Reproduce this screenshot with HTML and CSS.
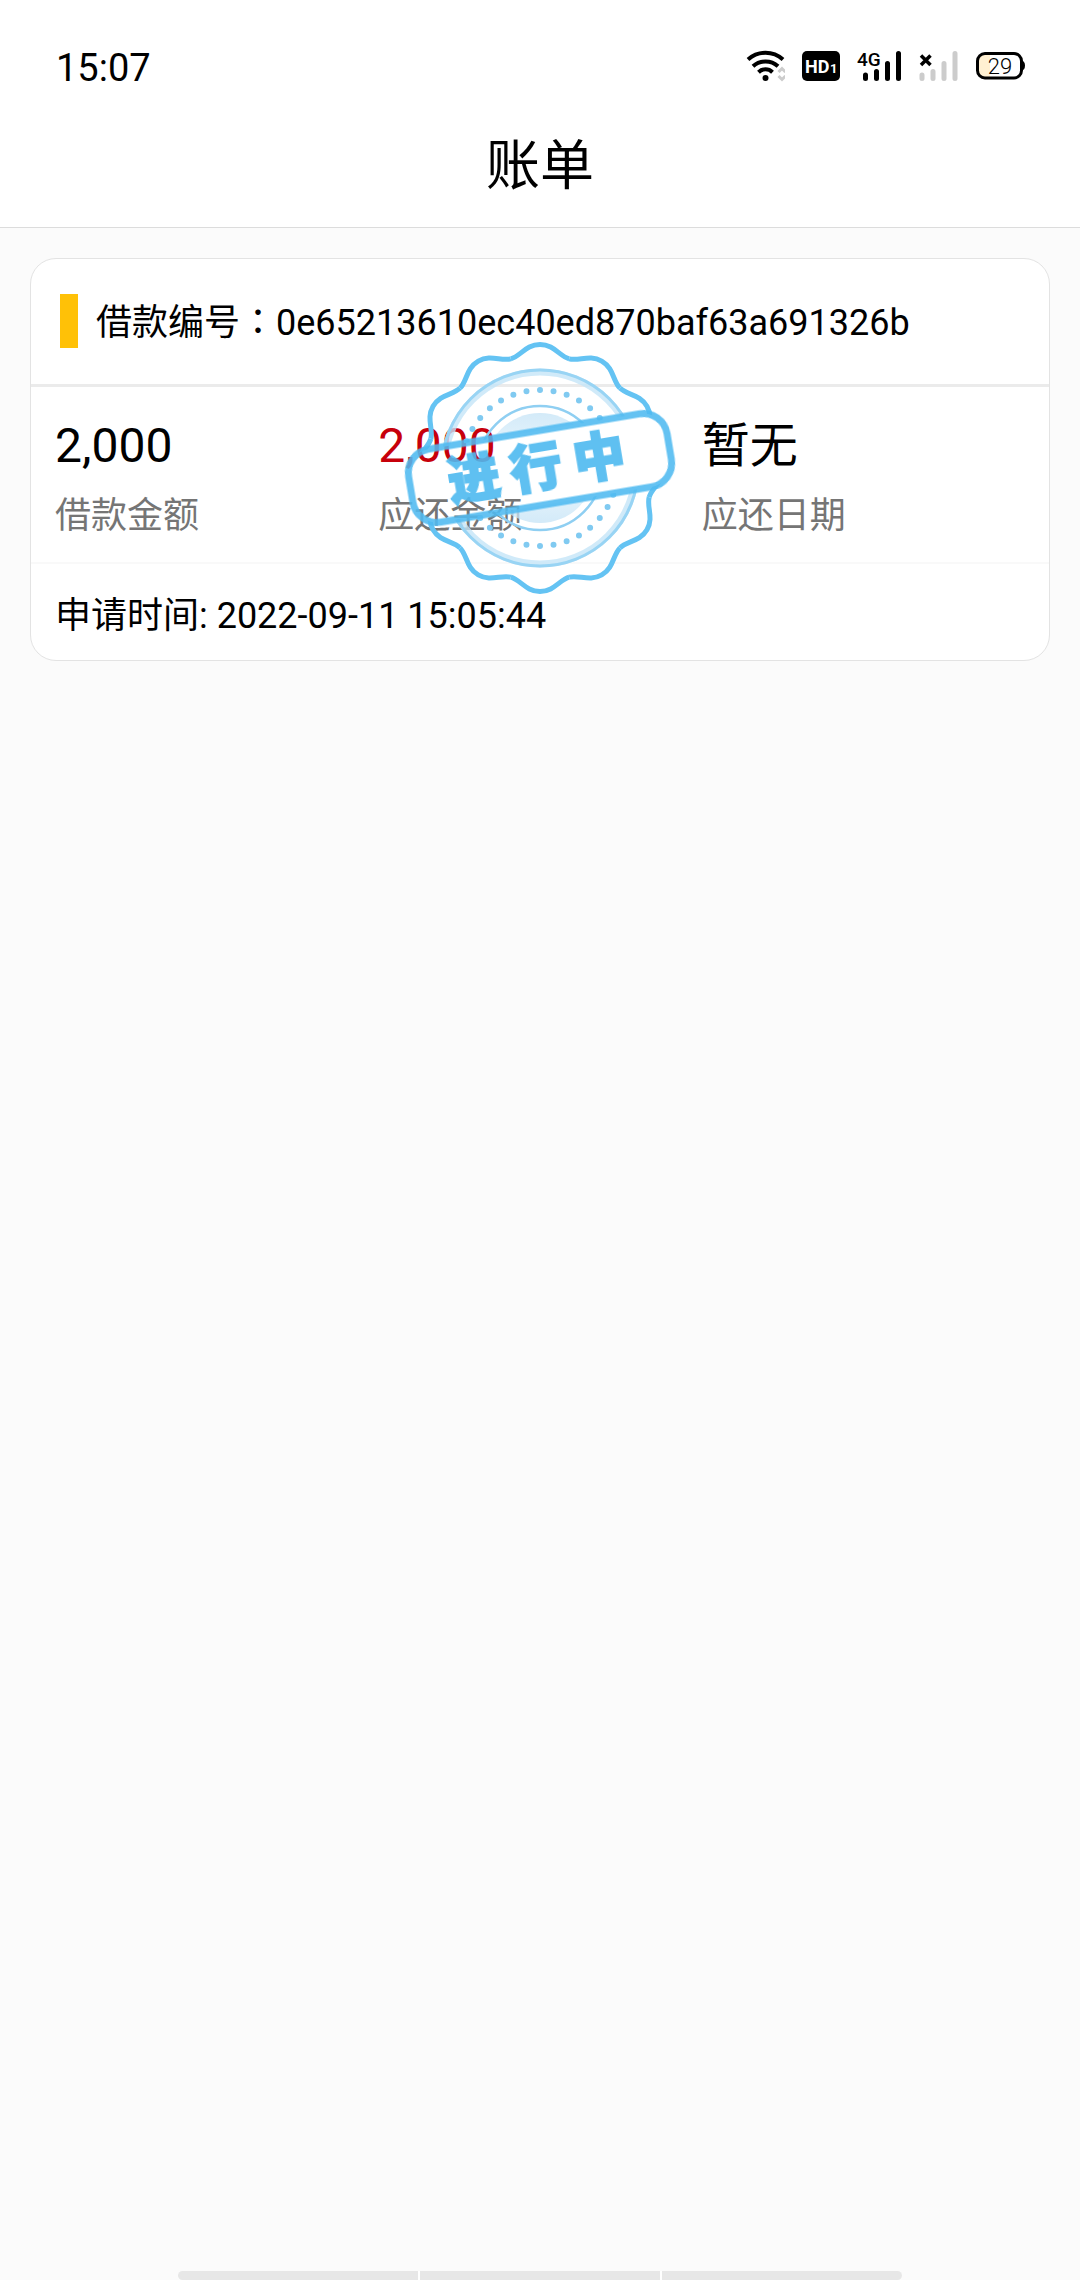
FILE: index.html
```html
<!DOCTYPE html>
<html lang="zh-CN">
<head>
    <meta charset="UTF-8">
    <meta name="viewport" content="width=device-width, initial-scale=1.0">
    <title>账单</title>
    <link rel="stylesheet" href="styles.css">
</head>
<body>
    <header class="header">
        <div class="status-bar">
            <span class="time">15:07</span>
            <div class="status-icons">
                <!-- wifi -->
                <svg width="39" height="32" viewBox="0 0 39 32">
                    <g fill="none" stroke="#000" stroke-width="4">
                        <path d="M2 9.500C12 .5 27 .5 37 9.500"/>
                        <path d="M7 16.200C14 9.800 25 9.800 32 16.200"/>
                        <path d="M12.500 22.200C16.500 18.300 22.500 18.300 26.500 22.200"/>
                    </g>
                    <circle cx="19.500" cy="28" r="3"/>
                    <path d="M32.500 22l3.500-3.500 3.500 3.500M32.500 26l3.500 3.500 3.500-3.500" fill="none" stroke="#ccc" stroke-width="3"/>
                </svg>
                <!-- HD -->
                <svg width="38" height="32" viewBox="0 0 38 32">
                    <rect y="1" width="38" height="30" rx="5"/>
                    <text class="hd" x="3" y="23">HD</text>
                    <text class="hd-num" x="28" y="23">1</text>
                </svg>
                <!-- sim 1 -->
                <svg width="45" height="32" viewBox="0 0 45 32">
                    <text class="network" x="0" y="16">4G</text>
                    <path d="M8.500 25v3.500M19.500 21.500v7M30.500 13.500v15M41.500 3.500v25" stroke="#000" stroke-width="5" stroke-linecap="round"/>
                </svg>
                <!-- sim 2 -->
                <svg width="39" height="32" viewBox="0 0 39 32">
                    <path d="M2 5.500l9.500 9.500M11.500 5.500l-9.500 9.500" stroke="#000" stroke-width="3.500"/>
                    <path d="M3 25v3.500M14 21.500v7M25 13.500v15M36 3.500v25" stroke="#ccc" stroke-width="5" stroke-linecap="round"/>
                </svg>
                <!-- battery -->
                <svg width="50" height="32" viewBox="0 0 50 32">
                    <path d="M9 3h6v25H9a6 6 0 0 1-6-6V9a6 6 0 0 1 6-6z" fill="#fff0d2"/>
                    <rect x="2.500" y="3.500" width="44" height="24.500" rx="7.500" fill="none" stroke="#000" stroke-width="3"/>
                    <path d="M46 10q4 1 4 5.500t-4 5.500z"/>
                    <text class="battery" x="25" y="24">29</text>
                </svg>
            </div>
        </div>
        <h1 class="title">账单</h1>
    </header>

    <main class="content">
        <section class="card">
            <div class="card-head">
                <span class="mark"></span>
                <span>借款编号<span class="colon" lang="zh-TW">：</span>0e65213610ec40ed870baf63a691326b</span>
            </div>
            <div class="card-body">
                <div class="item">
                    <div class="value">2,000</div>
                    <div class="label">借款金额</div>
                </div>
                <div class="item">
                    <div class="value red">2,000</div>
                    <div class="label">应还金额</div>
                </div>
                <div class="item">
                    <div class="value">暂无</div>
                    <div class="label">应还日期</div>
                </div>
            </div>
            <div class="card-foot">申请时间: 2022-09-11 15:05:44</div>

            <!-- stamp -->
            <svg class="stamp" width="276" height="256" viewBox="-138 -128 276 256">
                <defs>
                    <path id="lobe" d="M-29.250 -109.150C-19.600 -111.700 -14 -123.500 0 -123.500S19.600 -111.700 29.250 -109.150"/>
                    <mask id="cut" maskUnits="userSpaceOnUse" x="-138" y="-128" width="276" height="256">
                        <rect x="-138" y="-128" width="276" height="256" fill="#fff"/>
                        <rect x="-131" y="-37" width="262" height="74" rx="24" transform="rotate(-9.500)" fill="#000"/>
                    </mask>
                    <linearGradient id="disc" x1="0" y1="0" x2="0" y2="1">
                        <stop offset="0" stop-color="#c4e3f6"/>
                        <stop offset=".5" stop-color="#eef8fd"/>
                        <stop offset="1" stop-color="#c4e3f6"/>
                    </linearGradient>
                </defs>
                <g mask="url(#cut)" fill="none">
                    <g stroke="#64c3f3" stroke-width="5">
                        <use href="#lobe"/>
                        <use href="#lobe" transform="rotate(30)"/>
                        <use href="#lobe" transform="rotate(60)"/>
                        <use href="#lobe" transform="rotate(90)"/>
                        <use href="#lobe" transform="rotate(120)"/>
                        <use href="#lobe" transform="rotate(150)"/>
                        <use href="#lobe" transform="rotate(180)"/>
                        <use href="#lobe" transform="rotate(210)"/>
                        <use href="#lobe" transform="rotate(240)"/>
                        <use href="#lobe" transform="rotate(270)"/>
                        <use href="#lobe" transform="rotate(300)"/>
                        <use href="#lobe" transform="rotate(330)"/>
                    </g>
                    <circle r="96" stroke="#c4e5f8" stroke-width="7" opacity=".8"/>
                    <circle r="98" stroke="#98d4f4" stroke-width="3"/>
                    <circle r="78" stroke="#80caf1" stroke-width="6" stroke-linecap="round" pathLength="360" stroke-dasharray="0 10"/>
                    <circle r="62" stroke="#8fcff2" stroke-width="2.500"/>
                    <circle r="55" fill="url(#disc)" opacity=".75"/>
                </g>
                <g transform="rotate(-9.500)">
                    <rect x="-131" y="-37" width="262" height="74" rx="24" fill="none" stroke="#4ebaf0" stroke-opacity=".88" stroke-width="7"/>
                    <text class="stamp-text" y="18" x="-67 -4 60">进行中</text>
                </g>
            </svg>
        </section>
    </main>

    <div class="gesture-bar">
        <span></span>
        <span></span>
        <span></span>
    </div>
</body>
</html>
```
FILE: styles.css
```css
* {
    box-sizing: border-box;
}

body {
    margin: 0;
    min-height: 100vh;
    display: flex;
    flex-direction: column;
    background-color: #fbfbfb;
    color: #000;
    font-family: Roboto, "Noto Sans CJK SC", sans-serif;
    font-size: 36px;
    line-height: 48px;
}

.header {
    background-color: #fff;
    border-bottom: 1px solid #dcdcdc;
}

.status-bar {
    display: flex;
    justify-content: space-between;
    align-items: center;
    height: 104px;
    padding: 28px 55px 0 56px;
}

.time {
    padding-top: 4px;
    font-size: 38px;
}

.status-icons {
    display: flex;
    align-items: center;
    gap: 17px;
}

.hd {
    font-size: 18px;
    font-weight: bold;
    fill: #fff;
}

.hd-num {
    font-size: 13px;
    font-weight: bold;
    fill: #fff;
}

.network {
    font-size: 19px;
    font-weight: 500;
}

.battery {
    font-size: 22px;
    font-weight: 300;
    text-anchor: middle;
}

.title {
    margin: 0;
    padding-top: 2px;
    font-size: 54px;
    font-weight: normal;
    line-height: 121px;
    text-align: center;
}

.content {
    flex: 1;
    padding: 30px;
}

.card {
    position: relative;
    background-color: #fff;
    border: 1px solid #e3e3e3;
    border-radius: 26px;
}

.card-head {
    display: flex;
    align-items: center;
    gap: 18px;
    padding: 35px 29px 36px;
    border-bottom: 3px solid #ebebeb;
}

.mark {
    width: 18px;
    height: 54px;
    background-color: #ffc107;
}

/* full-width colon sits in the middle of its cell */
.colon {
    font-family: "Noto Sans CJK TC", sans-serif;
}

.card-body {
    display: flex;
    padding: 29px 24px 22px;
    border-bottom: 2px solid #f9f9f9;
}

.item {
    flex: 1;
}

.value {
    font-size: 48px;
    line-height: 60px;
    margin-bottom: 16px;
}

.red {
    color: #c7000b;
}

.label {
    color: #757575;
}

.card-foot {
    padding: 28px 24px 20px;
}

/* stamp lies over the card */
.stamp {
    position: absolute;
    top: 50%;
    left: 50%;
    transform: translate(-50%, -50%);
    margin-top: 8px;
}

.stamp-text {
    font-family: "Noto Sans CJK SC", sans-serif;
    font-size: 52px;
    font-weight: 900;
    text-anchor: middle;
    fill: #4ebaf0;
    stroke: #4ebaf0;
    stroke-width: 2px;
    opacity: .9;
}

.gesture-bar {
    display: flex;
    gap: 2px;
    width: 67%;
    height: 9px;
    margin: 0 auto;
    border-radius: 5px;
    overflow: hidden;
    background-color: #fff;
}

.gesture-bar span {
    flex: 1;
    background-color: #e7e7e7;
}
```
